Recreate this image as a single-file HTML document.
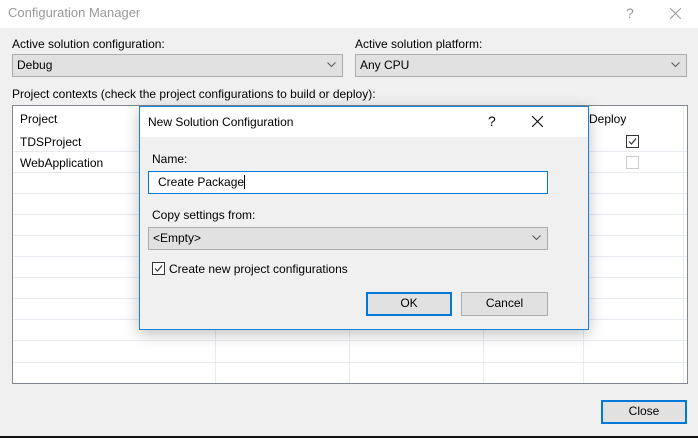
<!DOCTYPE html>
<html><head><style>
*{box-sizing:border-box;margin:0;padding:0}
body{width:698px;height:438px;background:#f0f0f0;font-family:"Liberation Sans",sans-serif;font-size:12px;color:#000;position:relative;overflow:hidden}
.a{position:absolute}
.combo{position:absolute;background:#e1e1e1;border:1px solid #adadad;padding:3px 4px;height:23px;line-height:15px}
.chev{position:absolute;right:6px;top:7px}
.btn{position:absolute;background:#e1e1e1;border:1px solid #adadad;text-align:center;line-height:21px}
.btn.def{border:2px solid #0078d7;line-height:19px}
</style></head><body>
<div class="a" style="left:0;top:0;width:698px;height:28px;background:#fff"></div>
<div class="a" style="left:8px;top:5px;color:#999;font-size:13px">Configuration Manager</div>
<div class="a" style="left:626px;top:5px;color:#999;font-size:14px">?</div>
<svg class="a" style="left:670px;top:8px" width="11" height="11"><path d="M0 0L11 11M11 0L0 11" stroke="#999" stroke-width="1"/></svg>
<div class="a" style="left:12px;top:37px">Active solution configuration:</div>
<div class="combo" style="left:12px;top:54px;width:331px">Debug<svg class="chev" width="9" height="6"><path d="M0.5 0.5L4.5 4.5L8.5 0.5" stroke="#555" fill="none"/></svg></div>
<div class="a" style="left:355px;top:37px">Active solution platform:</div>
<div class="combo" style="left:355px;top:54px;width:332px">Any CPU<svg class="chev" width="9" height="6"><path d="M0.5 0.5L4.5 4.5L8.5 0.5" stroke="#555" fill="none"/></svg></div>
<div class="a" style="left:12px;top:87px">Project contexts (check the project configurations to build or deploy):</div>
<div class="a" style="left:12px;top:105px;width:676px;height:279px;background:#fff;border:1px solid #828790;overflow:hidden">
<svg width="676" height="279" style="position:absolute;left:0;top:0">
<g stroke="#e8ecf2" stroke-width="1">
<path d="M0 45.5H676M0 66.5H676M0 87.5H676M0 108.5H676M0 129.5H676M0 150.5H676M0 171.5H676M0 192.5H676M0 213.5H676M0 234.5H676M0 256.5H676M0 277.5H676"/>
<path d="M202.5 24V279M336.5 24V279M470.5 24V279M570.5 0V279M670.5 0V279"/>
</g></svg>
<div class="a" style="left:7px;top:6px">Project</div>
<div class="a" style="left:7px;top:29px">TDSProject</div>
<div class="a" style="left:7px;top:50px">WebApplication</div>
<div class="a" style="left:576px;top:6px">Deploy</div>
<div class="a" style="left:613px;top:29px;width:13px;height:13px;border:1px solid #333"><svg width="11" height="11" style="position:absolute;left:0;top:0"><path d="M2 5.5L4.5 8L9 2.5" stroke="#333" fill="none" stroke-width="1.2"/></svg></div>
<div class="a" style="left:613px;top:50px;width:13px;height:13px;border:1px solid #ccc"></div>
</div>
<div class="btn def" style="left:601px;top:400px;width:86px;height:24px">Close</div>
<div class="a" style="left:0;top:436px;width:698px;height:2px;background:#111"></div>
<div class="a" style="left:139px;top:106px;width:450px;height:224px;background:#f0f0f0;border:1px solid #1883d7;box-shadow:0 4px 14px rgba(0,0,0,.25)">
<div class="a" style="left:0;top:0;width:448px;height:30px;background:#fff"></div>
<div class="a" style="left:8px;top:8px">New Solution Configuration</div>
<div class="a" style="left:348px;top:6px;font-size:14px">?</div>
<svg class="a" style="left:392px;top:9px" width="11" height="11"><path d="M0 0L11 11M11 0L0 11" stroke="#000" stroke-width="1"/></svg>
<div class="a" style="left:12px;top:45px">Name:</div>
<div class="a" style="left:8px;top:64px;width:400px;height:23px;background:#fff;border:1px solid #0078d7;padding:3px 9px;line-height:15px">Create Package<span style="border-left:1px solid #000"></span></div>
<div class="a" style="left:12px;top:101px">Copy settings from:</div>
<div class="combo" style="left:8px;top:120px;width:400px">&lt;Empty&gt;<svg class="chev" width="9" height="6"><path d="M0.5 0.5L4.5 4.5L8.5 0.5" stroke="#555" fill="none"/></svg></div>
<div class="a" style="left:12px;top:155px;width:13px;height:13px;border:1px solid #333;background:#fff"><svg width="11" height="11" style="position:absolute;left:0;top:0"><path d="M2 5.5L4.5 8L9 2.5" stroke="#333" fill="none" stroke-width="1.2"/></svg></div>
<div class="a" style="left:29px;top:155px">Create new project configurations</div>
<div class="btn def" style="left:226px;top:185px;width:86px;height:24px">OK</div>
<div class="btn" style="left:321px;top:185px;width:87px;height:24px">Cancel</div>
</div>
</body></html>
